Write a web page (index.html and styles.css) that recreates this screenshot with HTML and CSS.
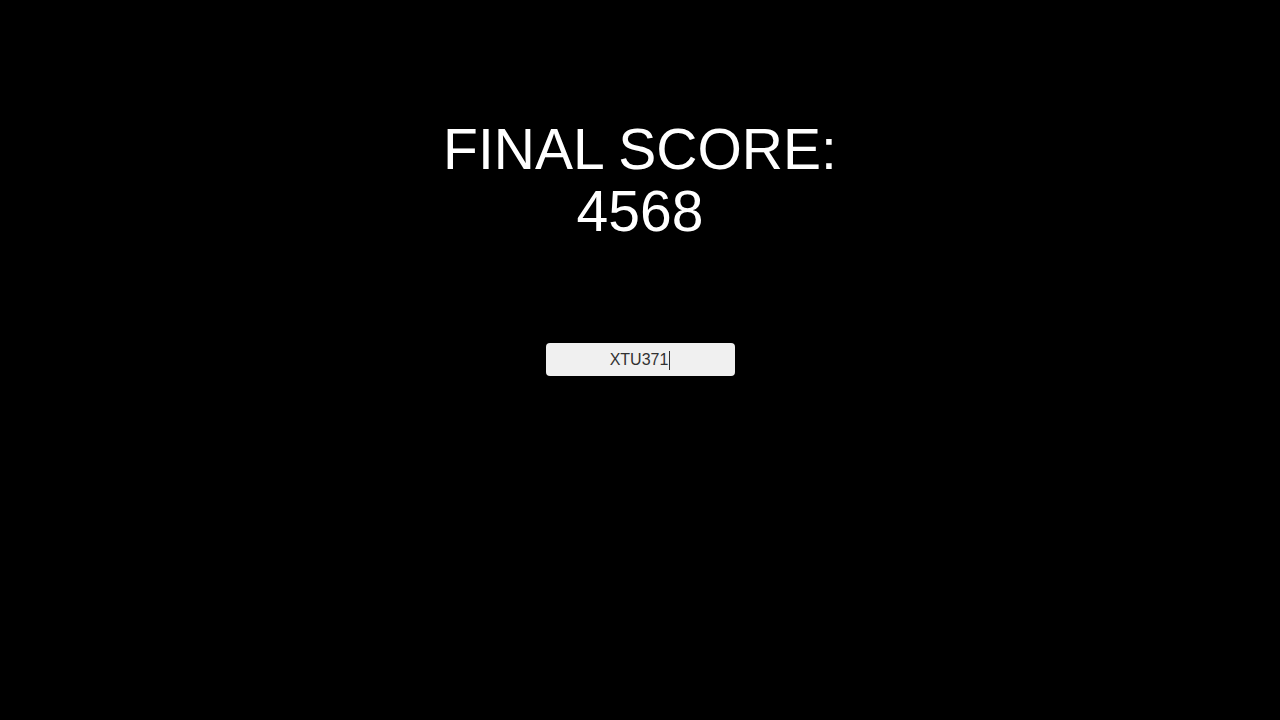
FILE: index.html
```html
<!DOCTYPE html>
<html>
<head>
<meta charset="utf-8">
<link rel="stylesheet" href="styles.css">
</head>
<body>
<main class="screen">
  <h1 class="score">FINAL SCORE:<br>4568</h1>
  <div class="name-box"><span class="name-text">XTU371</span><span class="caret"></span></div>
</main>
</body>
</html>
```
FILE: styles.css
```css
html, body {
  margin: 0;
  padding: 0;
  background: #000;
  width: 1280px;
  height: 720px;
  overflow: hidden;
}
.screen {
  display: flex;
  flex-direction: column;
  align-items: center;
  padding-top: 118px;
  font-family: "Liberation Sans", Arial, sans-serif;
}
.score {
  margin: 0;
  color: #fff;
  font-weight: normal;
  font-size: 57px;
  line-height: 62px;
  text-align: center;
}
.name-box {
  margin-top: 101px;
  width: 189px;
  height: 33px;
  box-sizing: border-box;
  background: #f0f0f0;
  border-radius: 4px;
  display: flex;
  align-items: center;
  justify-content: center;
  color: #323232;
  font-size: 16px;
  padding-top: 1px;
}
.caret {
  display: inline-block;
  width: 1px;
  height: 19px;
  background: #323232;
  margin-left: 1px;
}
```
